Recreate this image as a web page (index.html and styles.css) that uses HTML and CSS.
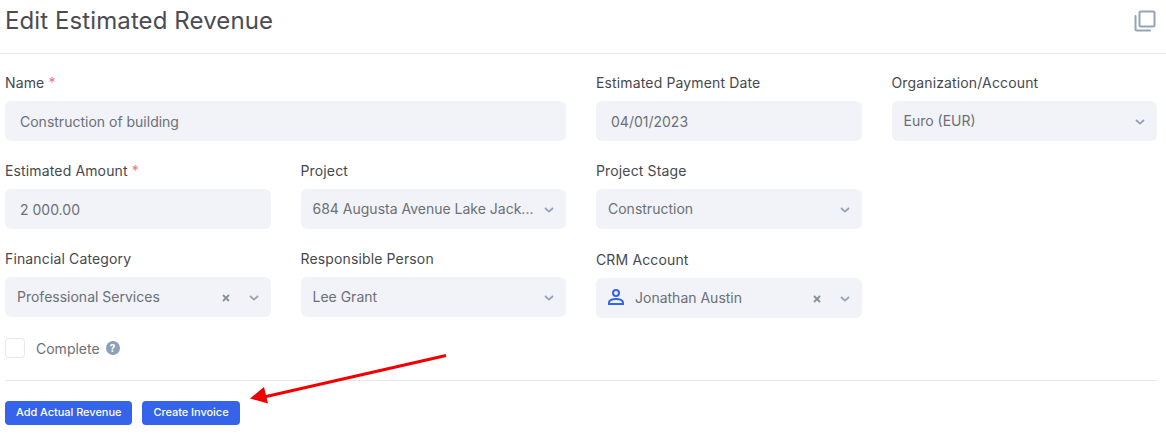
FILE: index.html
```html
<!DOCTYPE html>
<html lang="en">
<head>
<meta charset="utf-8">
<title>Edit Estimated Revenue</title>
<link rel="stylesheet" href="styles.css">
</head>
<body>
<div class="page">
  <header class="header">
    <h1 class="title">Edit Estimated Revenue</h1>
    <svg class="copy-icon" width="22" height="22" viewBox="0 0 22 22" fill="none" stroke="#94a3b8" stroke-width="2" stroke-linejoin="round" stroke-linecap="round">
      <rect x="5.5" y="1.5" width="15" height="15" rx="1.5"/>
      <path d="M1.5 6v13.2a1.3 1.3 0 0 0 1.3 1.3H16"/>
    </svg>
  </header>
  <form class="form">
    <div class="field span-2">
      <label class="label">Name <span class="req">*</span></label>
      <div class="control">Construction of building</div>
    </div>
    <div class="field">
      <label class="label">Estimated Payment Date</label>
      <div class="control">04/01/2023</div>
    </div>
    <div class="field">
      <label class="label">Organization/Account</label>
      <div class="control select"><span class="value">Euro (EUR)</span><svg class="chev" width="10" height="6" viewBox="0 0 10 6"><path d="M1 1l4 3.6L9 1" fill="none" stroke="#94a3b8" stroke-width="1.8"/></svg></div>
    </div>

    <div class="field">
      <label class="label">Estimated Amount <span class="req">*</span></label>
      <div class="control">2 000.00</div>
    </div>
    <div class="field">
      <label class="label">Project</label>
      <div class="control select"><span class="value">684 Augusta Avenue Lake Jack...</span><svg class="chev" width="10" height="6" viewBox="0 0 10 6"><path d="M1 1l4 3.6L9 1" fill="none" stroke="#94a3b8" stroke-width="1.8"/></svg></div>
    </div>
    <div class="field row-end">
      <label class="label">Project Stage</label>
      <div class="control select"><span class="value">Construction</span><svg class="chev" width="10" height="6" viewBox="0 0 10 6"><path d="M1 1l4 3.6L9 1" fill="none" stroke="#94a3b8" stroke-width="1.8"/></svg></div>
    </div>

    <div class="field row-start">
      <label class="label">Financial Category</label>
      <div class="control select"><span class="value">Professional Services</span><svg class="clear" width="8" height="8" viewBox="0 0 8 8"><path d="M1 1l6 6M7 1L1 7" stroke="#8a8f98" stroke-width="1.8"/></svg><svg class="chev" width="10" height="6" viewBox="0 0 10 6"><path d="M1 1l4 3.6L9 1" fill="none" stroke="#94a3b8" stroke-width="1.8"/></svg></div>
    </div>
    <div class="field">
      <label class="label">Responsible Person</label>
      <div class="control select"><span class="value">Lee Grant</span><svg class="chev" width="10" height="6" viewBox="0 0 10 6"><path d="M1 1l4 3.6L9 1" fill="none" stroke="#94a3b8" stroke-width="1.8"/></svg></div>
    </div>
    <div class="field shifted">
      <label class="label">CRM Account</label>
      <div class="control select"><svg class="person" width="18" height="18" viewBox="0 0 18 18" fill="none" stroke="#3563e9" stroke-width="2"><circle cx="9" cy="5" r="3"/><path d="M2 16v-1.5C2 12.5 5 11 9 11s7 1.500 7 3.500V16z"/></svg><span class="value">Jonathan Austin</span><svg class="clear" width="8" height="8" viewBox="0 0 8 8"><path d="M1 1l6 6M7 1L1 7" stroke="#8a8f98" stroke-width="1.800"/></svg><svg class="chev" width="10" height="6" viewBox="0 0 10 6"><path d="M1 1l4 3.6L9 1" fill="none" stroke="#94a3b8" stroke-width="1.8"/></svg></div>
    </div>
  </form>
  <div class="check-row">
    <span class="checkbox"></span>
    <span class="check-label">Complete</span>
    <span class="help">?</span>
  </div>
  <hr class="divider">
  <div class="actions">
    <button type="button" class="btn">Add Actual Revenue</button>
    <button type="button" class="btn">Create Invoice</button>
  </div>
  <svg class="arrow" width="200" height="60" viewBox="0 0 200 60">
    <path d="M196 2.500L14 44" stroke="#f00000" stroke-width="3" fill="none"/>
    <path d="M0 45.500L14 34l4 16.500z" fill="#f00000"/>
  </svg>
</div>
</body>
</html>
```
FILE: styles.css
```css
* { box-sizing: border-box; }
html, body { margin: 0; padding: 0; background: #fff; }
body {
  font-family: Inter, "Liberation Sans", sans-serif;
  color: #3f4146;
  width: 1166px;
  height: 440px;
  overflow: hidden;
}
.page { position: relative; padding-left: 5px; padding-right: 9px; }
.header {
  display: flex;
  align-items: center;
  justify-content: space-between;
  height: 54px;
  margin: 0 -9px 0 -5px;
  padding: 0 10px 12px 5px;
  border-bottom: 1px solid #e8e8f0;
}
.title { margin: 0; font-size: 24px; font-weight: 400; line-height: 42px; color: #4a4c52; letter-spacing: 0.1px; }
.form {
  display: grid;
  grid-template-columns: repeat(4, 1fr);
  column-gap: 30px;
  row-gap: 20px;
  padding-top: 19px;
}
.field { display: flex; flex-direction: column; gap: 8px; }
.span-2 { grid-column: span 2; }
.row-end { grid-column: 3; }
.row-start { grid-column: 1; }
.shifted { padding-top: 1px; }
.label { font-size: 14px; line-height: 20px; color: #46484e; letter-spacing: 0.14px; }
.req { color: #f4708a; }
.control {
  height: 40px;
  display: flex;
  align-items: center;
  padding: 0 15px;
  background: #f1f3f8;
  border-radius: 6px;
  font-size: 14px;
  color: #6c6f76;
}
.select { padding: 0 12px; }
.value { flex: 1; white-space: nowrap; overflow: hidden; margin-bottom: 2px; }
.person { margin: 0 10px 2px -1px; }
.clear { margin-right: 19px; margin-top: 1px; }
.chev { flex: none; margin-top: 1px; }
.check-row {
  display: flex;
  align-items: center;
  height: 20px;
  margin-top: 20px;
  font-size: 14px;
  color: #6c6f76;
}
.checkbox {
  width: 20px;
  height: 20px;
  border: 1px solid #e6e7f0;
  border-radius: 4px;
  margin-right: 11px;
  background: #fff;
}
.help {
  width: 14px;
  height: 14px;
  margin-left: 6px;
  border-radius: 50%;
  background: #8ea0b8;
  color: #fff;
  font-size: 10px;
  font-weight: 700;
  line-height: 14px;
  text-align: center;
}
.divider { border: 0; border-top: 1px solid #e8e8f0; margin: 22px 0 20px; }
.actions { display: flex; gap: 10px; }
.btn {
  height: 24px;
  padding: 0 11px 2px;
  background: #3563e9;
  border: 0;
  border-radius: 4px;
  color: #fff;
  font-family: inherit;
  font-size: 11px;
  font-weight: 500;
  letter-spacing: -0.04px;
}
.arrow { position: absolute; left: 250px; top: 353px; }
```
